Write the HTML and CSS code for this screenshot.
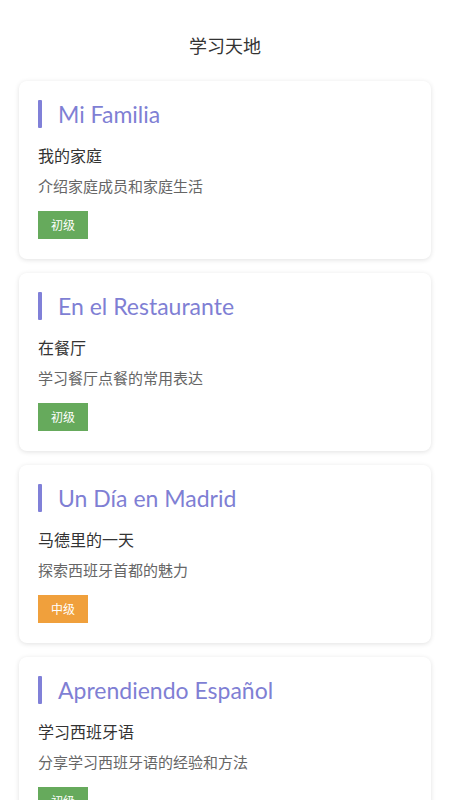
FILE: index.html
```html
<!DOCTYPE html>
<html lang="zh">
<head>
<meta charset="utf-8">
<title>学习天地</title>
<link rel="stylesheet" href="styles.css">
</head>
<body>
<header class="header">学习天地</header>
<main class="list">
  <section class="card">
    <div class="card-title"><span class="bar"></span><span class="es">Mi Familia</span></div>
    <div class="sub">我的家庭</div>
    <div class="desc">介绍家庭成员和家庭生活</div>
    <span class="tag tag-easy">初级</span>
  </section>
  <section class="card">
    <div class="card-title"><span class="bar"></span><span class="es">En el Restaurante</span></div>
    <div class="sub">在餐厅</div>
    <div class="desc">学习餐厅点餐的常用表达</div>
    <span class="tag tag-easy">初级</span>
  </section>
  <section class="card">
    <div class="card-title"><span class="bar"></span><span class="es">Un Día en Madrid</span></div>
    <div class="sub">马德里的一天</div>
    <div class="desc">探索西班牙首都的魅力</div>
    <span class="tag tag-mid">中级</span>
  </section>
  <section class="card">
    <div class="card-title"><span class="bar"></span><span class="es">Aprendiendo Español</span></div>
    <div class="sub">学习西班牙语</div>
    <div class="desc">分享学习西班牙语的经验和方法</div>
    <span class="tag tag-easy">初级</span>
  </section>
</main>
</body>
</html>
```
FILE: styles.css
```css
html, body {
  margin: 0;
  padding: 0;
  background: #ffffff;
}
body {
  font-family: "Noto Sans CJK SC", "Noto Sans", sans-serif;
  color: #333;
}
.header {
  text-align: center;
  font-size: 18px;
  line-height: 24px;
  color: #333;
  padding: 33px 0 24px;
}
.list {
  display: flex;
  flex-direction: column;
  gap: 14px;
  padding: 0 19px 20px;
}
.card {
  background: #fff;
  border-radius: 8px;
  box-shadow: 0 1px 5px rgba(0, 0, 0, 0.12);
  padding: 19px 19px 20px;
  display: flex;
  flex-direction: column;
  align-items: flex-start;
}
.card-title {
  display: flex;
  align-items: center;
  gap: 16px;
  height: 28px;
}
.bar {
  width: 4px;
  height: 28px;
  background: #8080d8;
  border-radius: 1px;
}
.es {
  font-family: "Lato", "Noto Sans", sans-serif;
  font-size: 23px;
  color: #7f7fd4;
  line-height: 28px;
}
.sub {
  margin-top: 15px;
  font-size: 16px;
  line-height: 24px;
  color: #333;
}
.desc {
  margin-top: 9px;
  font-size: 15px;
  line-height: 20px;
  color: #666;
}
.tag {
  margin-top: 15px;
  height: 28px;
  line-height: 28px;
  padding: 0 13px;
  font-size: 12px;
  color: #fff;
}
.tag-easy { background: #66aa5c; }
.tag-mid { background: #f0a03c; }
```
